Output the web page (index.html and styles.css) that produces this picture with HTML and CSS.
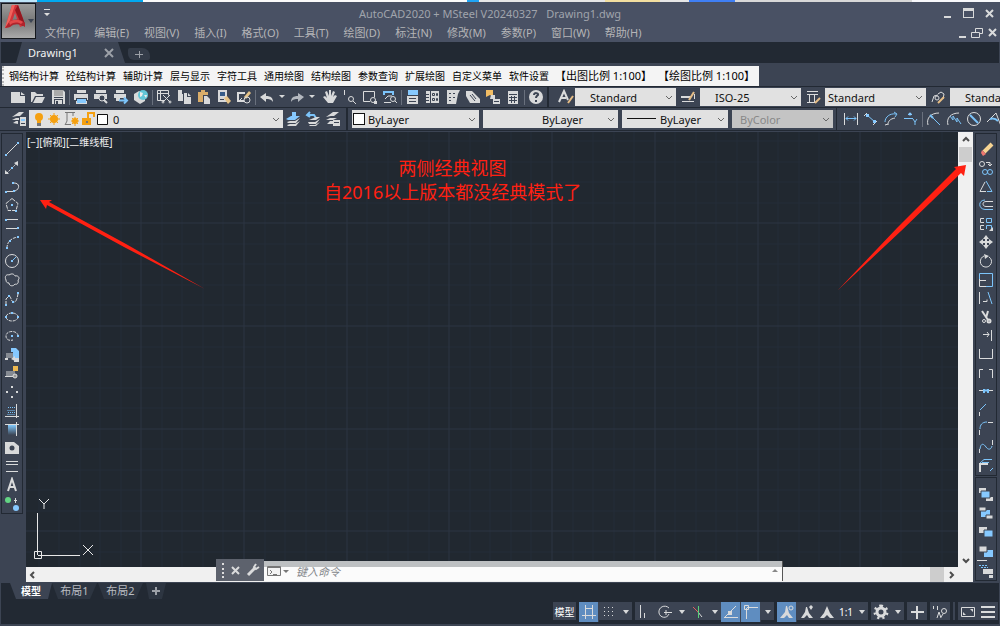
FILE: index.html
```html
<!DOCTYPE html>
<html lang="zh-CN">
<head>
<meta charset="utf-8">
<title>AutoCAD2020 - Drawing1.dwg</title>
<link rel="stylesheet" href="styles.css">
</head>
<body>
<div class="app">
  <div class="backdrop"></div>
  <header class="head">
    <button class="logo" aria-label="应用程序菜单"><svg width="33" height="34" viewBox="0 0 33 34"><path fill="#d2343a" d="M10 1h6l7 20-5 2-5-14-5 14-5 1z"/><path fill="#f0625c" d="M10 1l3 0-7 21-3 2z"/><path fill="#93171f" d="M16 1l7 19-3 2-7-16z"/><path fill="#b0242c" d="M3 24l4-6c6-4 12-3 16 1v4c-5-3-10-4-15 0z"/><path fill="#e2494a" d="M7 18c6-4 12-2 14 0l-2 2c-4-2-7-2-11 1z"/><path fill="#3c4453" d="M26 15h6l-3 4z"/></svg></button>
    <div class="head-main">
      <div class="title-row">
        <button class="quick" aria-label="快速访问"><svg width="8" height="8" viewBox="0 0 8 8"><path fill="#ddd" d="M1 0h6v1H1zM1 4h6L4 7z"/></svg></button>
        <div class="title">AutoCAD2020 + MSteel V20240327 &nbsp; Drawing1.dwg</div>
        <div class="wins">
          <button aria-label="最小化"><svg width="12" height="12" viewBox="0 0 12 12"><path class="f" d="M3 9h7v2H3z"/></svg></button>
          <button aria-label="最大化"><svg width="12" height="12" viewBox="0 0 12 12"><path class="f" fill-rule="evenodd" d="M1 1h11v10H1zM2 4v6h9V4z"/></svg></button>
          <button aria-label="关闭"><svg width="12" height="12" viewBox="0 0 12 12"><path class="s2" d="M3 3l7 7M10 3l-7 7"/></svg></button>
        </div>
      </div>
      <div class="menu-row">
        <nav class="menu">
          <button>文件(F)</button><button>编辑(E)</button><button>视图(V)</button><button>插入(I)</button><button>格式(O)</button><button>工具(T)</button><button>绘图(D)</button><button>标注(N)</button><button>修改(M)</button><button>参数(P)</button><button>窗口(W)</button><button>帮助(H)</button>
        </nav>
        <div class="wins small">
          <button aria-label="最小化文档"><svg width="12" height="12" viewBox="0 0 12 12"><path class="f" d="M3 9h7v2H3z"/></svg></button>
          <button aria-label="还原文档"><svg width="12" height="12" viewBox="0 0 12 12"><path d="M4.500 5V1.500h7v5H9M.5 5.500h8v5h-8z"/></svg></button>
          <button aria-label="关闭文档"><svg width="12" height="12" viewBox="0 0 12 12"><path class="s2" d="M3 2l7 7M10 2l-7 7"/></svg></button>
        </div>
      </div>
    </div>
  </header>

  <div class="filetabs">
    <div class="filetab"><span>Drawing1</span><button aria-label="关闭图形"><svg width="10" height="10" viewBox="0 0 10 10"><path class="g s2" d="M1 1l8 8M9 1l-8 8"/></svg></button></div>
    <button class="newtab" aria-label="新图形"><svg width="8" height="8" viewBox="0 0 8 8"><path class="g" d="M0 4.500h8M4.500 1v7"/></svg></button>
  </div>

  <nav class="msteel">
    <button>钢结构计算</button><button>砼结构计算</button><button>辅助计算</button><button>层与显示</button><button>字符工具</button><button>通用绘图</button><button>结构绘图</button><button>参数查询</button><button>扩展绘图</button><button>自定义菜单</button><button>软件设置</button><button class="scale">【出图比例 1:100】</button><button class="scale">【绘图比例 1:100】</button>
  </nav>

  <div class="bar">
    <div class="tools std">
      <button aria-label="新建"><svg viewBox="0 0 16 16"><path class="f" d="M1 3h9v4h5v7H1zM11 3l4 3h-4z"/></svg></button>
      <button aria-label="打开"><svg viewBox="0 0 16 16"><path class="f" d="M1 3h4l2 2h6v2H5l-3 6H1zM6 8h9l-3 6H3z"/></svg></button>
      <button aria-label="保存"><svg viewBox="0 0 16 16"><path class="f" d="M2 1h11l2 2v12H2z"/><path class="k" d="M4 8h9v1H4zM4 10h9v5H4z"/><path fill="#aaa" d="M4 1h9v6H4z"/><path class="f" d="M5 11h7v4H5z"/><path class="k" d="M6 12h2v3H6z"/></svg></button>
      <i class="sep"></i>
      <button aria-label="打印"><svg viewBox="0 0 16 16"><path class="f" d="M4 1h9v3H4zM1 5h14v6H1zM3 12h11v3H3z"/><path class="k" d="M3 9h11v2H3z"/><path class="bf" d="M4 10h9v4H4z"/></svg></button>
      <button aria-label="打印预览"><svg viewBox="0 0 16 16"><path class="f" d="M3 1h10v3H3zM1 5h13v5H1z"/><circle class="kf" cx="9" cy="9" r="3"/><path class="s2" d="M11 11l3 3"/></svg></button>
      <button aria-label="发布"><svg viewBox="0 0 16 16"><path class="f" d="M3 1h8v3H3zM1 5h12v4H1zM3 9h4v3H3z"/><path class="b s2" d="M6 11.500h8M11 8.500l3 3-3 3"/></svg></button>
      <button aria-label="三维打印"><svg viewBox="0 0 16 16"><path class="f" d="M1 5l5-3 6 3v7l-5 3-6-4z"/><circle cx="10" cy="6" r="5" fill="#63c6d8"/><path fill="#eee" d="M7 3l3 1-1 3-2 1zM11 6l3 0-1 3z"/></svg></button>
      <i class="sep"></i>
      <button aria-label="剪切"><svg viewBox="0 0 16 16"><path d="M8 11.500H1.500v-10h11v5M1 4.500h12M4.500 2v9"/><path d="M7 6l7 7M14 6l-7 7"/><circle cx="7" cy="13" r="1"/><circle cx="14" cy="13" r="1"/></svg></button>
      <button aria-label="复制"><svg viewBox="0 0 16 16"><path class="f" d="M2 1h4v4h1v7H2zM8 4h3v4h4v7H8zM12 4l3 3h-3z"/></svg></button>
      <button aria-label="粘贴"><svg viewBox="0 0 16 16"><path fill="#d9ad6a" d="M2 3h3V1h4v2h3v3H7v7H2z"/><path class="f" d="M8 7h3l3 3v5H8z"/></svg></button>
      <button aria-label="特性匹配"><svg viewBox="0 0 16 16"><path class="f" d="M2 1h9v12H2z"/><path fill="#365b88" d="M4 3h5v4H4z"/><path fill="#e6c387" d="M8 9l3-2 4 5-3 3z"/><path class="ks" d="M4 10.500h4"/></svg></button>
      <button aria-label="块编辑器"><svg viewBox="0 0 16 16"><path class="s2" d="M8 12H2V4h7"/><path fill="#e6c387" d="M8 8l5-6 2 2-5 6z"/><circle cx="11" cy="11" r="3"/><path d="M6 9l-2 2 2 2"/></svg></button>
      <i class="sep"></i>
      <button aria-label="放弃"><svg viewBox="0 0 16 16"><path class="f" d="M1 8l6-4v3c5 0 7 2 7 6-2-3-4-3-7-3v3z"/></svg></button>
      <button class="drop" aria-label="放弃列表"><svg viewBox="0 0 6 16"><path class="f" d="M0 6h6L3 9z"/></svg></button>
      <button aria-label="重做"><svg viewBox="0 0 16 16"><path fill="#b4b8bf" d="M15 8L9 4v3c-5 0-7 2-7 6 2-3 4-3 7-3v3z"/></svg></button>
      <button class="drop" aria-label="重做列表"><svg viewBox="0 0 6 16"><path class="f" d="M0 6h6L3 9z"/></svg></button>
      <button class="pan" aria-label="平移"><svg viewBox="0 0 16 16"><path class="f" d="M6 14L1 8l2-1 2 2-2-6 2-1 2 5V1h2v6l2-5 2 1-2 5 2-2 2 1-4 7z"/></svg></button>
      <button aria-label="缩放"><svg viewBox="0 0 16 16"><path d="M2.500 1v5"/><circle cx="9" cy="10" r="2.500"/><path d="M11 12l3 3"/></svg></button>
      <button aria-label="窗口缩放"><svg viewBox="0 0 16 16"><path d="M8 12.500H1.500v-10h11v6"/><circle cx="11" cy="11" r="2.500"/><path class="f" d="M12 12h3v3h-3z"/></svg></button>
      <button aria-label="缩放上一个"><svg viewBox="0 0 16 16"><path class="b s2" d="M2 6V3h9v3"/><path d="M2 13.500h7M3 10l3-3h4"/><circle cx="11" cy="10" r="2.500"/><path d="M13 12l2 2"/></svg></button>
      <i class="sep"></i>
      <button aria-label="特性"><svg viewBox="0 0 16 16"><path class="f" d="M2 7h11v8H2z"/><path class="bf" d="M3 1h10v5H3z"/><path class="ks" d="M4 9.500h7M4 12.500h7"/></svg></button>
      <button aria-label="设计中心"><svg viewBox="0 0 16 16"><path class="f" d="M1 2h4v12H1zM6 2h8v12H6z"/><path class="ks" d="M1 5.500h3M1 8.500h3M1 11.500h3M7.500 4.500h2v2h-2zM11.500 4.500h1v2h-1zM7.500 9.500h2v2h-2zM11.500 9.500h1v2h-1z"/></svg></button>
      <button aria-label="工具选项板"><svg viewBox="0 0 16 16"><path class="f" d="M2 1h13l-2 4-2 10H2z"/><path class="ks" d="M4 4.500h2M8 4.500h2M4 8.500h2M8 8.500h2M4 11.500h2"/></svg></button>
      <button aria-label="图纸集"><svg viewBox="0 0 16 16"><path class="f" d="M1 2h6l8 8v4H5l-4-7z"/><path class="ks" d="M7 5l4 5M5 6l5 6"/></svg></button>
      <button aria-label="标记集"><svg viewBox="0 0 16 16"><path fill="#f2bd64" d="M1 1h7v7l-3-2-4 2z"/><path class="f" d="M6 6h4v4H5zM8 10h7v5H8z"/><path class="ks" d="M9 12.500h5"/></svg></button>
      <button aria-label="计算器"><svg viewBox="0 0 16 16"><path class="f" d="M3 2h10v13H3z"/><path class="ks" d="M4 5.500h8M4 8.500h8M4 11.500h8M6.500 7v7M9.500 7v7"/></svg></button>
      <i class="sep"></i>
      <button aria-label="帮助"><svg viewBox="0 0 16 16"><circle class="f" cx="8" cy="8" r="7"/><path class="ks s2" d="M6 6c0-3 5-2 4 0-1 1-2 1-2 3M8 11v2"/></svg></button>
    </div>
    <div class="tools styles">
      <label for="textstyle" aria-label="文字样式"><svg viewBox="0 0 16 16"><path class="s2" d="M1 13L6 2l4 9M3 9h5"/><path class="tan" d="M10 14l5-7"/></svg></label>
      <span class="combo mid"><select id="textstyle"><option>Standard</option></select><svg class="chev" viewBox="0 0 8 5"><path d="M1 1l3 3 3-3"/></svg></span>
      <label for="dimstyle" aria-label="标注样式"><svg viewBox="0 0 16 16"><path class="s2" d="M1 8h10"/><path d="M2 12.500h12M14.500 5v5"/><path class="tan" d="M9 11l5-8"/></svg></label>
      <span class="combo mid"><select id="dimstyle"><option>ISO-25</option></select><svg class="chev" viewBox="0 0 8 5"><path d="M1 1l3 3 3-3"/></svg></span>
      <label for="tablestyle" aria-label="表格样式"><svg viewBox="0 0 16 16"><path d="M2 2.500h11M2 5.500h11M4.500 6v7M9.500 6v7M2 13.500h8"/><path class="tan" d="M10 14l5-5"/></svg></label>
      <span class="combo flush"><select id="tablestyle"><option>Standard</option></select><svg class="chev" viewBox="0 0 8 5"><path d="M1 1l3 3 3-3"/></svg></span>
      <label for="leaderstyle" aria-label="多重引线样式"><svg viewBox="0 0 16 16"><path d="M2 13l2-6 4-1M8 5l3-2 3 2-1 5"/><circle cx="7" cy="9" r="2"/><path class="tan" d="M8 14l6-6"/></svg></label>
      <span class="combo mid"><select id="leaderstyle"><option>Standard</option></select></span>
    </div>
  </div>

  <div class="bar second">
    <div class="tools layers">
      <button aria-label="图层特性"><svg viewBox="0 0 16 16"><path class="f" d="M1 6l7-5h5L9 5H6zM1 9l4-2h3v2H1zM2 12l3-2h2v3zM9 6h6v9H9z"/><path class="bf" d="M10 8h4v2h-4z"/><path class="ks" d="M10 12.500h4"/></svg></button>
      <span class="combo layer">
        <svg class="layer-icons" width="80" height="16" viewBox="0 0 80 16"><g fill="#f5a010"><circle cx="10" cy="6" r="4"/><path d="M8 9h4v3H8z"/><circle cx="25" cy="8" r="4"/><path d="M64 6V3h-4v4h-2V1h8v5zM53 7h9v7h-9z"/><circle cx="46" cy="10" r="3"/></g><path stroke="#f5a010" d="M25 2v12M19 8h12M21 4l8 8M29 4l-8 8M46 6v9M42 10h8M43 7l6 6M49 7l-6 6"/><path fill="#777" d="M8 12h4v3H8zM57 10h2v2h-2z"/><path stroke="#777" d="M36 1.500h10M38 2v8l-2 4M36 13.500h6M44 2v3"/><path fill="#fff" stroke="#111" d="M68.500 3.500h10v10h-10z"/></svg>
        <select aria-label="图层"><option>0</option></select><svg class="chev" viewBox="0 0 8 5"><path d="M1 1l3 3 3-3"/></svg>
      </span>
      <button aria-label="置为当前"><svg viewBox="0 0 16 16"><path class="bf" d="M1 8l5-3h9l-5 4H3zM7 1h4v4H7z"/><path class="f" d="M2 11l3-1h5l5-3-4 5H3zM2 14l3-1h5l5-3-4 5H3z"/></svg></button>
      <button aria-label="上一个图层"><svg viewBox="0 0 16 16"><path class="b s2" d="M5 1L2 4l3 2M3 4h6l2 3"/><path class="f" d="M11 6h4l-4 3H4zM3 11h7l5-3-4 5H4zM4 14h6l5-3-4 4H5z"/></svg></button>
      <button aria-label="图层状态"><svg viewBox="0 0 16 16"><path class="f" d="M1 6l7-5h6L9 5H6zM1 9l4-2h7L8 9zM2 13l3-3h3v3zM8 9h7v6H8z"/><path class="ks" d="M9 11.500h5"/></svg></button>
    </div>
    <div class="tools props">
      <span class="combo color"><i class="swatch"></i><select aria-label="颜色"><option>ByLayer</option></select><svg class="chev" viewBox="0 0 8 5"><path d="M1 1l3 3 3-3"/></svg></span>
      <span class="combo ltype"><select aria-label="线型"><option>ByLayer</option></select><svg class="chev" viewBox="0 0 8 5"><path d="M1 1l3 3 3-3"/></svg></span>
      <span class="combo lweight"><i class="rule"></i><select aria-label="线宽"><option>ByLayer</option></select><svg class="chev" viewBox="0 0 8 5"><path d="M1 1l3 3 3-3"/></svg></span>
      <span class="combo plot"><select aria-label="打印样式" disabled><option>ByColor</option></select><svg class="chev" viewBox="0 0 8 5"><path d="M1 1l3 3 3-3"/></svg></span>
    </div>
    <div class="tools dims">
      <button aria-label="线性"><svg viewBox="0 0 16 16"><path d="M1.500 2v12M14.500 2v12"/><path class="b" d="M3 7.500h10M5 5.500l-2 2 2 2M11 5.500l2 2-2 2"/></svg></button>
      <button aria-label="对齐"><svg viewBox="0 0 16 16"><path d="M1 5l3-3M10 14l4-4"/><path class="b" d="M4 4l8 7"/><path class="bf" d="M3 3h3v3H3zM10 9h3v3h-3z"/></svg></button>
      <button aria-label="弧长"><svg viewBox="0 0 16 16"><path d="M5 14c0-4 2-6 7-7M2 14l3-1"/><path class="b" d="M2 11c0-5 5-9 11-8M11 1l3 2-2 3"/></svg></button>
      <button aria-label="坐标"><svg viewBox="0 0 16 16"><path class="b" d="M1 7.500h9M5 3.500h4M10 8l2 3 2-3M12 11v3"/><circle class="bf" cx="7" cy="3" r="1.500"/></svg></button>
      <i class="sep"></i>
      <button aria-label="半径"><svg viewBox="0 0 16 16"><path d="M2 14C0 7 5 2 13 2"/><path class="b s2" d="M4 4l3 3"/><path class="b" d="M7 7l7 7"/></svg></button>
      <button aria-label="折弯"><svg viewBox="0 0 16 16"><path d="M2 14C0 7 5 2 13 2"/><path class="b" d="M4 5l3 4V5l4 6V7l4 6"/></svg></button>
      <button aria-label="直径"><svg viewBox="0 0 16 16"><circle cx="8" cy="8" r="6.500"/><path class="b s2" d="M4 4l8 8"/></svg></button>
      <button aria-label="角度"><svg viewBox="0 0 16 16"><path d="M1 11l9-9 5 13"/><path class="b s2" d="M4 8c3-1 6 0 8 2"/></svg></button>
    </div>
  </div>

  <main class="work">
    <div class="palette left">
      <button aria-label="直线"><svg viewBox="0 0 16 16"><path d="M2 14L14 2"/><path class="bf" d="M1 13h2v2H1zM13 1h2v2h-2z"/></svg></button>
      <button aria-label="构造线"><svg viewBox="0 0 16 16"><path stroke-dasharray="2 1" d="M3 13L13 3"/><path class="f" d="M1 14v-4l4 4zM10 3l4-2v5z"/><path class="bf" d="M7 7h2v2H7z"/></svg></button>
      <button aria-label="多段线"><svg viewBox="0 0 16 16"><path d="M3 12.500h6M11 12c5-2 5-8-1-8"/><path class="bf" d="M1 12h2v2H1zM8 3h2v2H8zM9 11h2v2H9z"/></svg></button>
      <button aria-label="多边形"><svg viewBox="0 0 16 16"><path stroke-dasharray="4 1" d="M8 1.500l6 5-2 7H4l-2-7z"/><path class="bf" d="M7 7h2v2H7zM11 13h2v2h-2z"/></svg></button>
      <button aria-label="矩形"><svg viewBox="0 0 16 16"><path d="M2 3.500h12M2 12.500h11"/><path class="bf" d="M1 3h2v2H1zM13 11h2v2h-2z"/></svg></button>
      <button aria-label="圆弧"><svg viewBox="0 0 16 16"><path stroke-dasharray="3 1" d="M3 13c0-6 4-10 11-11"/><path class="bf" d="M2 12h2v2H2zM5 5h2v2H5zM13 1h2v2h-2z"/></svg></button>
      <button aria-label="圆"><svg viewBox="0 0 16 16"><circle cx="8" cy="8" r="6.500"/><path class="b" d="M8 8l4-4"/><path class="bf" d="M7 7h2v2H7z"/></svg></button>
      <button aria-label="修订云线"><svg viewBox="0 0 16 16"><path d="M2 8c-2-4 1-6 3-5 3-2 5-1 6 1 4-1 5 3 3 4 1 3-1 5-3 4-2 3-6 2-6-1-2 0-3-1-3-3z"/></svg></button>
      <button aria-label="样条曲线"><svg viewBox="0 0 16 16"><path stroke-dasharray="4 1" d="M2 14V8l3-3c2 0 2 5 4 6 3 1 4-3 5-8"/><path class="bf" d="M1 13h2v2H1zM4 4h2v2H4zM8 10h2v2H8zM13 1h2v2h-2z"/></svg></button>
      <button aria-label="椭圆"><svg viewBox="0 0 16 16"><ellipse stroke-dasharray="3 1" cx="8" cy="8" rx="6" ry="4"/><path class="bf" d="M7 3h2v2H7zM1 7h2v2H1zM13 7h2v2h-2z"/></svg></button>
      <button aria-label="椭圆弧"><svg viewBox="0 0 16 16"><path stroke-dasharray="3 1" d="M14 8c0-6-12-6-12 0 0 4 4 5 7 4"/><path class="bf" d="M7 7h2v2H7zM13 7h2v2h-2z"/></svg></button>
      <button aria-label="插入块"><svg viewBox="0 0 16 16"><path fill="#858a92" d="M2 6h9v5H2z"/><path class="bf" d="M7 1h5l3 3v7H9V5H7z"/><path class="f" d="M1 11h3v2H1zM10 11h5v4h-5zM7 12l4-3v5z"/></svg></button>
      <button aria-label="创建块"><svg viewBox="0 0 16 16"><path fill="#858a92" d="M2 6h9v5H2z"/><path fill="#edb84f" d="M9 1h5v5H9z"/><path d="M1 11.500h8"/><circle class="gf" cx="11" cy="11" r="2"/></svg></button>
      <button aria-label="点"><svg viewBox="0 0 16 16"><path class="f" d="M7 2h2v2H7zM7 12h2v2H7zM2 7h2v2H2zM12 7h2v2h-2z"/></svg></button>
      <button aria-label="图案填充"><svg viewBox="0 0 16 16"><path class="b" stroke-dasharray="1 1" d="M4 4.500h8M3.500 7.500h8M4 9.500h8M3.500 11.500h8"/><path d="M12.500 1v14M1 13.500h14"/></svg></button>
      <button aria-label="渐变色"><svg viewBox="0 0 16 16"><defs><linearGradient id="fade" x2="0" y2="1"><stop stop-color="#80c8fc"/><stop offset="1" stop-color="#3c4453"/></linearGradient></defs><path fill="url(#fade)" d="M4 4h8v10H4z"/><path d="M1 3.500h14M12.500 1v14"/></svg></button>
      <button aria-label="面域"><svg viewBox="0 0 16 16"><path class="f" d="M1 2h9l5 4v8H1z"/><circle class="k" cx="8" cy="8" r="2.500"/></svg></button>
      <button aria-label="表格"><svg viewBox="0 0 16 16"><path d="M2 3.500h12M2 6.500h12M2 13.500h12"/></svg></button>
      <button aria-label="多行文字"><svg viewBox="0 0 16 16"><path class="s2" d="M4 14L8 2l4 12M5 10h6"/></svg></button>
      <button aria-label="添加选定对象"><svg viewBox="0 0 16 16"><circle cx="4" cy="4" r="3" fill="#63d584"/><circle class="bf" cx="12" cy="12" r="3"/><path d="M11.500 2v5M10 4.500h3"/></svg></button>
    </div>

    <div class="view">
      <div class="canvas">
        <svg class="grid"><path class="minor" d="M13 0v4000M33 0v4000M54 0v4000M74 0v4000M95 0v4000M136 0v4000M156 0v4000M177 0v4000M197 0v4000M239 0v4000M259 0v4000M280 0v4000M300 0v4000M341 0v4000M362 0v4000M382 0v4000M403 0v4000M444 0v4000M464 0v4000M485 0v4000M505 0v4000M547 0v4000M567 0v4000M588 0v4000M608 0v4000M649 0v4000M670 0v4000M690 0v4000M711 0v4000M752 0v4000M773 0v4000M793 0v4000M814 0v4000M855 0v4000M875 0v4000M896 0v4000M916 0v4000M0 9h4000M0 30h4000M0 50h4000M0 71h4000M0 112h4000M0 132h4000M0 153h4000M0 173h4000M0 215h4000M0 235h4000M0 256h4000M0 276h4000M0 317h4000M0 338h4000M0 358h4000M0 379h4000M0 420h4000"/><path class="major" d="M115 0v4000M218 0v4000M321 0v4000M423 0v4000M526 0v4000M629 0v4000M732 0v4000M834 0v4000M0 91h4000M0 194h4000M0 297h4000M0 399h4000"/></svg>
        <div class="viewlabel">[−][俯视][二维线框]</div>
        <p class="note">两侧经典视图<br>自2016以上版本都没经典模式了</p>
        <svg class="ucs" width="64" height="64" viewBox="0 0 64 64"><path d="M7.500 57V15M8 57.500h42M4.500 53.500h7v7h-7zM9 1l5 5 5-5M14 6v5M53 47l10 10M63 47L53 57"/></svg>
      </div>
      <div class="vscroll"><button aria-label="向上滚动"><svg viewBox="0 0 8 8"><path class="dark" d="M1 5l3-3 3 3"/></svg></button><i class="thumb"></i><button class="end" aria-label="向下滚动"><svg viewBox="0 0 8 8"><path class="dark" d="M1 3l3 3 3-3"/></svg></button></div>
      <div class="hscroll"><button aria-label="向左滚动"><svg viewBox="0 0 8 8"><path class="dark" d="M5 1L2 4l3 3"/></svg></button><i class="thumb"></i><button aria-label="向右滚动"><svg viewBox="0 0 8 8"><path class="dark" d="M3 1l3 3-3 3"/></svg></button></div>
      <div class="command">
        <div class="handle"><i class="grip"></i><button aria-label="关闭命令行"><svg width="9" height="9" viewBox="0 0 9 9"><path class="s2" d="M1 1l7 7M8 1L1 8"/></svg></button><button aria-label="自定义"><svg width="14" height="14" viewBox="0 0 14 14"><path stroke-width="3" d="M2 12l7-7"/><path class="s2" d="M10 1L8 4l2 2 3-2"/></svg></button></div>
        <div class="entry"><svg width="22" height="12" viewBox="0 0 22 12"><path fill="#f3f3f3" stroke="#777" d="M.5 1.500h13v9H.5z"/><path stroke="#777" d="M0 2.500h14M3 5l2 2-2 2M6 9.500h4"/><path fill="#777" d="M16 5h6l-3 3z"/></svg><input type="text" placeholder="键入命令" aria-label="命令"><svg width="8" height="8" viewBox="0 0 8 8"><path fill="#888" d="M1 5h6L4 2z"/></svg></div>
      </div>
      <svg class="arrow-left" width="166" height="90" viewBox="0 0 166 90"><path d="M0 0l12 0-3 2L86 44l79 45L84 47 7 5l-1 4z"/></svg>
      <svg class="arrow-right" width="130" height="126" viewBox="0 0 130 126"><path d="M129 0l-2 11-3-3L64 66 1 125 60 63l59-59-2-2z"/></svg>
    </div>

    <div class="side">
      <div class="palette modify">
        <button aria-label="删除"><svg viewBox="0 0 16 16"><path stroke="#f6d493" stroke-width="4" d="M6 11l8-8"/><path fill="#ee7770" d="M4 9l4 4-3 2-2-3z"/></svg></button>
        <button aria-label="复制对象"><svg viewBox="0 0 16 16"><circle cx="4" cy="4" r="2.500"/><path d="M8 2.500h4v3M10 4l2 2 2-2"/><g class="b"><circle cx="7" cy="12" r="2.500"/><circle cx="12" cy="12" r="2.500"/></g></svg></button>
        <button aria-label="镜像"><svg viewBox="0 0 16 16"><path d="M7 3L2 12.500h6"/><path class="b" d="M8 2l6 10.500H9"/></svg></button>
        <button aria-label="偏移"><svg viewBox="0 0 16 16"><path class="b" d="M7 3C0 3 0 12 7 12.500h8"/><path d="M15 4.500H8c-4 0-4 5 0 5h7"/></svg></button>
        <button aria-label="阵列"><svg viewBox="0 0 16 16"><path d="M6 2.500H2.500v4H6M6 9.500H2.500v4H6"/><path class="b" d="M8.500 2.500h5v4h-5zM8.500 13V9.500h5V13"/><path class="f" d="M15 11v4h-4z"/></svg></button>
        <button aria-label="移动"><svg viewBox="0 0 16 16"><path class="s2" d="M8 3v10M3 8h10"/><path class="f" d="M8 1l3 4H5zM8 15l3-4H5zM1 8l4-3v6zM15 8l-4-3v6z"/></svg></button>
        <button aria-label="旋转"><svg viewBox="0 0 16 16"><path d="M6 3C1 5 1 13 7 14c6 1 9-7 4-10"/><path class="f" d="M6 1l5 2-4 3z"/></svg></button>
        <button aria-label="缩放对象"><svg viewBox="0 0 16 16"><path class="b" d="M1.500 7V1.500h13v13H8"/><path d="M1.500 7v7.500H8M2 8.500h6"/></svg></button>
        <button aria-label="拉伸"><svg viewBox="0 0 16 16"><path d="M1.500 2v12M5 11.500h4v-2"/><path class="b" d="M10 2l4 12"/></svg></button>
        <button aria-label="修剪"><svg viewBox="0 0 16 16"><path class="s2" d="M4 2l6 9M10 2L8 9"/><circle cx="6" cy="12" r="1.500"/><circle class="s2" cx="11" cy="12" r="1.500"/></svg></button>
        <button aria-label="延伸"><svg viewBox="0 0 16 16"><path d="M5 7.500h6M9 5l2 2.500L9 10M13.500 3v11"/></svg></button>
        <button aria-label="打断于点"><svg viewBox="0 0 16 16"><path d="M1.500 3v9.500h13V3"/></svg></button>
        <button aria-label="打断"><svg viewBox="0 0 16 16"><path d="M1.500 13V4.500H5M11 4.500h3.500V13"/></svg></button>
        <button aria-label="合并"><svg viewBox="0 0 16 16"><path d="M1 7.500h14"/><path class="b s2" d="M5 7.500h6M6 6v4M10 6v4"/></svg></button>
        <button aria-label="倒角"><svg viewBox="0 0 16 16"><path class="b" d="M2 8l6-6"/><path d="M1.500 10v4"/></svg></button>
        <button aria-label="圆角"><svg viewBox="0 0 16 16"><path class="b" d="M2 9c0-4 2-7 7-7"/><path d="M1.500 10v5M10 2.500h5"/></svg></button>
        <button aria-label="光顺曲线"><svg viewBox="0 0 16 16"><path class="b" d="M2 10c1-7 4-5 6-2s5 3 6-1"/><path d="M1.500 10v4M14.500 1v5"/></svg></button>
        <button aria-label="分解"><svg viewBox="0 0 16 16"><path class="b" d="M2 5l4-3.500h8M12 13l3-3M4 4.500h7"/><path class="s2" d="M2 14V6h8"/></svg></button>
      </div>
      <div class="palette order">
        <button aria-label="前置"><svg viewBox="0 0 16 16"><path class="f" d="M1 2h7v5H1zM8 11h7v4H8z"/><path class="bf kk" d="M3 5h9v7H3z"/></svg></button>
        <button aria-label="后置"><svg viewBox="0 0 16 16"><path class="bf" d="M3 5h9v7H3z"/><path class="f kk" d="M1 2h7v4H1zM8 10h7v4H8z"/></svg></button>
        <button aria-label="置于对象之上"><svg viewBox="0 0 16 16"><path class="f" d="M1 3h8v6H1z"/><path class="bf kk" d="M6 6h9v7H6z"/></svg></button>
        <button aria-label="置于对象之下"><svg viewBox="0 0 16 16"><path class="bf" d="M6 7h9v7H6z"/><path class="f kk" d="M1 3h8v6H1z"/></svg></button>
        <i class="line"></i>
        <button aria-label="注释前置"><svg viewBox="0 0 16 16"><path class="b" stroke-dasharray="2 1" d="M1 2.500h9M3 4.500h7"/><path class="f" d="M5 6h10v5H5zM11 12h4v3h-4z"/></svg></button>
      </div>
    </div>
  </main>

  <nav class="layouts"><button class="on">模型</button><button>布局1</button><button>布局2</button><button class="add" aria-label="新建布局"><svg width="8" height="8" viewBox="0 0 8 8"><path class="g s2" d="M0 4h8M4 0v8"/></svg></button></nav>

  <footer class="status">
    <div class="grp"><button class="txt">模型</button></div>
    <div class="grp"><button class="act" aria-label="栅格"><svg viewBox="0 0 16 16"><path d="M4.500 1v14M11.500 1v14M1 11.500h14M5 4.500h6"/></svg></button><button aria-label="捕捉"><svg viewBox="0 0 16 16"><path class="f" d="M3 3h1v1H3zM7 3h1v1H7zM11 3h1v1h-1zM3 7h1v1H3zM7 7h1v1H7zM11 7h1v1h-1zM3 11h1v1H3zM7 11h1v1H7zM11 11h1v1h-1z"/></svg></button><button class="tri" aria-label="捕捉选项"><svg viewBox="0 0 6 16"><path class="f" d="M0 6h6L3 10z"/></svg></button></div>
    <div class="grp"><button aria-label="正交"><svg viewBox="0 0 16 16"><path d="M3.500 1v13M7.500 9v5"/></svg></button><button aria-label="极轴"><svg viewBox="0 0 16 16"><path d="M12 4c-4-4-11-1-10 5 1 5 8 6 10 1M7 8.500h8M9 6v5"/></svg></button><button class="tri" aria-label="极轴选项"><svg viewBox="0 0 6 16"><path class="f" d="M0 6h6L3 10z"/></svg></button><button aria-label="等轴测"><svg viewBox="0 0 16 16"><path stroke="#e26060" d="M3 3l5 5"/><path d="M8 8l4 5"/><path stroke="#58cf78" d="M8.500 2v12"/></svg></button><button class="tri" aria-label="等轴测选项"><svg viewBox="0 0 6 16"><path class="f" d="M0 6h6L3 10z"/></svg></button><button class="act" aria-label="对象捕捉追踪"><svg viewBox="0 0 16 16"><path d="M1 13.500h14M2 13L13 2"/><path class="f" d="M5 7h4v4H5z"/></svg></button><button class="act" aria-label="对象捕捉"><svg viewBox="0 0 16 16"><path d="M3.500 15V4M4 3.500h11M1.500 1.500h4v4h-4z"/></svg></button><button class="tri" aria-label="对象捕捉选项"><svg viewBox="0 0 6 16"><path class="f" d="M0 6h6L3 10z"/></svg></button></div>
    <div class="grp"><button class="act" aria-label="注释可见性"><svg viewBox="0 0 16 16"><path class="f" d="M7 2l1 0 2 7 4 5h-4l-2-3-3 3H1l5-6z"/><circle cx="12" cy="4" r="2"/></svg></button><button aria-label="自动缩放"><svg viewBox="0 0 16 16"><path class="f" d="M7 3h1l2 6 4 5h-4l-2-3-3 3H2l4-6zM12 1l2 2-2 3-2-3z"/></svg></button><button aria-label="注释比例"><svg viewBox="0 0 16 16"><path class="f" d="M8 2l3 7 4 5h-4l-3-3-3 3H1l4-5z"/></svg></button><button class="ratio">1:1</button><button class="tri" aria-label="比例列表"><svg viewBox="0 0 6 16"><path class="f" d="M0 6h6L3 10z"/></svg></button></div>
    <div class="grp"><button aria-label="切换工作空间"><svg viewBox="0 0 16 16"><circle cx="8" cy="8" r="4" stroke-width="3"/><path stroke-width="3" stroke-dasharray="2 3" d="M8 2a6 6 0 1 1 0 12a6 6 0 1 1 0-12"/></svg></button><button class="tri" aria-label="工作空间列表"><svg viewBox="0 0 6 16"><path class="f" d="M0 6h6L3 10z"/></svg></button></div>
    <div class="grp"><button aria-label="注释监视器"><svg viewBox="0 0 16 16"><path class="s2" d="M8 2v13M2 8h13"/></svg></button></div>
    <div class="grp"><button aria-label="隔离对象"><svg viewBox="0 0 16 16"><path d="M1.500 2v3M5.500 2v4M5 14l2-6 2 6"/><circle cx="12" cy="7" r="2.500"/><path d="M11 10l-2 3"/></svg></button></div>
    <div class="grp bit"></div>
    <div class="grp"><button aria-label="全屏显示"><svg viewBox="0 0 16 16"><path d="M1.500 3.500h13v9h-13z"/><path class="f" d="M3 11V8l3 3zM13 5v3l-3-3z"/></svg></button><button aria-label="自定义状态栏"><svg viewBox="0 0 16 16"><path class="s2" d="M1 3h14M1 8h14M1 13h14"/></svg></button></div>
  </footer>
</div>
</body>
</html>
```
FILE: styles.css
```css
* { box-sizing: border-box; }
html, body { height: 100%; margin: 0; }
body, button, select, input {
  font-family: "Noto Sans", "Noto Sans CJK SC", sans-serif;
  font-size: 11px;
}
button {
  display: flex; align-items: center; justify-content: center;
  padding: 0; border: 0; background: none; color: inherit;
  white-space: nowrap; line-height: 16px;
}
svg { display: block; fill: none; stroke: #dadbdc; flex: none; }
svg [fill]:not([stroke]) { stroke: none; }
.f { fill: #d8d9da; stroke: none; }
.b { stroke: #7cc4fa; }
.bf { fill: #86c9ff; stroke: none; }
.gf { fill: #999; }
.g { stroke: #9da1a8; }
.k { fill: #3c4453; stroke: none; }
.kf { fill: #3c4453; }
.ks { stroke: #3c4453; }
.kk { stroke: #3c4453; stroke-width: 1; }
.s2 { stroke-width: 2; }
.tan { stroke: #e6bd86; stroke-width: 2; }
.dark { stroke: #4d4d4d; stroke-width: 2; }

.app {
  display: flex; flex-direction: column;
  height: 100%; overflow: hidden;
  background: #3c4453; color: #fff;
}
.backdrop {
  height: 2px; flex: none;
  background: linear-gradient(90deg, #bfe6fa 37px, #00a8f0 37px 143px, #fafafa 143px 467px, #20a5f5 467px 479px, #e6e6e6 479px 605px, #f3dfa0 605px 660px, #e6e6e6 660px 689px, #3f7ff5 689px 735px, #d8d8d8 735px 912px, #f8f8fb 912px);
}

/* title and menu */
.head { display: flex; height: 40px; flex: none; background: #495164; padding-left: 1px; }
.logo {
  width: 35px; height: 36px; margin-top: 1px;
  background: linear-gradient(#9c9c9c, #777 50%, #aaa);
  border: 1px solid #15181d;
}
.head-main { flex: 1; display: flex; flex-direction: column; }
.title-row { display: flex; align-items: center; height: 22px; padding: 0 5px 0 7px; }
.quick { width: 8px; }
.title { flex: 1; text-align: center; color: #a0a4ac; font-size: 11px; padding-right: 12px; }
.wins { display: flex; gap: 9px; }
.wins.small { gap: 3px; }
.menu-row { display: flex; justify-content: space-between; align-items: center; height: 18px; padding: 0 2px 0 9px; }
.menu { display: flex; gap: 15px; color: #b5b5b7; }

.filetabs { display: flex; height: 21px; flex: none; background: #222933; margin: 0 1px; }
.filetab {
  display: flex; align-items: center; justify-content: space-between;
  width: 109px; margin-left: 15px; padding: 0 11px 0 12px;
  background: #3c4453; color: #f2f2f2; font-size: 11px;
  clip-path: polygon(6px 0, 102px 0, 100% 100%, 0 100%);
}
.newtab { width: 22px; height: 12px; margin: 6px 0 0 3px; background: #343c49; border-radius: 2px 8px 2px 6px; }

/* white menu strip */
.msteel {
  display: flex; align-self: flex-start; align-items: center; gap: 7px;
  height: 20px; margin: 3px 0 0 2px; padding: 0 4px 0 5px;
  border-left: 2px dotted #bbb; background: #f4f4f4; color: #000; flex: none;
}
.msteel button { font-size: 10px; }
.msteel .scale { font-size: 11px; margin-left: -1px; }

/* tool bars */
.bar { display: flex; height: 21px; flex: none; border-top: 1px solid #222933; overflow: hidden; }
.bar.second { height: 24px; border-bottom: 1px solid #222933; margin-bottom: 1px; }
.tools { display: flex; align-items: center; flex: none; border-right: 1px solid #222933; }
.tools > button { width: 20px; height: 20px; }
.tools button svg, .tools label svg, .palette button svg, .status button svg { width: 16px; height: 16px; }
.tools .drop { width: 10px; }
.tools .drop svg, .status .tri svg { width: 6px; }
.tools .pan { margin-left: 3px; }
.sep { width: 1px; height: 15px; margin: 0 1px; background: #69707d; }
.std { padding-left: 8px; width: 549px; border-right-width: 2px; }
.styles { padding-left: 7px; border: 0; }
.styles label { width: 19px; display: flex; justify-content: center; }
.combo + label { width: 24px; }

.combo { position: relative; display: block; height: 18px; width: 101px; flex: none; }
.combo select {
  display: block; width: 100%; height: 100%; margin: 0; padding: 0 18px 0 15px;
  appearance: none; border: 0; border-radius: 0;
  background: #e1e1e1; color: #111; font-size: 11px;
}
.combo.flush select { padding-left: 3px; }
.chev { position: absolute; right: 3px; top: 7px; width: 8px; height: 5px; stroke: #666; }
.layers { width: 348px; padding-left: 9px; border-right-width: 2px; }
.combo.layer { width: 254px; }
.combo.layer select { padding-left: 84px; }
.layer-icons { position: absolute; left: 0; top: 1px; }
.props { gap: 4px; padding: 0 3px 0 4px; }
.combo.color { width: 127px; }
.combo.color select { padding-left: 16px; }
.swatch { position: absolute; left: 1px; top: 3px; width: 12px; height: 12px; background: #fff; border: 1px solid #111; }
.combo.ltype { width: 135px; }
.combo.ltype select { padding-left: 59px; }
.combo.lweight { width: 106px; }
.combo.lweight select { padding-left: 38px; }
.rule { position: absolute; left: 5px; top: 8px; width: 29px; height: 1px; background: #111; }
.combo.plot select { background: #c4c4c4; color: #888; opacity: 1; padding-left: 8px; }
.dims { padding-left: 4px; border: 0; }

/* workspace */
.work { display: flex; flex: 1; min-height: 0; }
.palette {
  display: flex; flex-direction: column;
  width: 22px; padding: 6px 0 0; border: 1px solid #222933;
}
.palette button { flex: 1; min-height: 0; }
.left { height: 381px; margin: 1px 3px 0 1px; flex: none; }
.modify { height: 343px; }
.order { height: 104px; margin-top: 1px; }
.line { width: 10px; height: 1px; background: #ddd; margin-left: 1px; }
.side { width: 25px; margin: 1px 0 0 2px; flex: none; overflow: hidden; }

.view {
  position: relative; flex: 1; min-width: 0;
  display: grid; grid-template: 1fr 15px / 1fr 15px;
}
.canvas { position: relative; background: #212830; overflow: hidden; }
.grid { position: absolute; inset: 0; width: 100%; height: 100%; }
.minor { stroke: #252d38; }
.major { stroke: #2c3443; }
.viewlabel { position: absolute; left: 1px; top: 3px; font-size: 10px; line-height: 14px; color: #f0f0f0; }
.note {
  position: absolute; left: 298px; top: 24px; margin: 0;
  font-size: 18px; line-height: 24px;
  text-align: center; white-space: nowrap; color: #ff2012;
}
.ucs { position: absolute; left: 4px; bottom: 5px; stroke: #e8e8e8; }
.vscroll { display: flex; flex-direction: column; background: #f0f0f0; padding: 0 1px; }
.vscroll button { height: 15px; }
.vscroll svg, .hscroll svg { width: 8px; height: 8px; }
.vscroll .thumb { height: 15px; background: #cdcdcd; }
.vscroll .end { margin-top: auto; }
.hscroll { grid-column: 1 / -1; display: flex; background: #f0f0f0; padding-right: 15px; }
.hscroll button { width: 14px; }
.hscroll .thumb { width: 14px; margin-left: auto; background: #cdcdcd; }

.command { position: absolute; left: 190px; right: 190px; bottom: 1px; height: 22px; display: flex; }
.handle { width: 48px; display: flex; align-items: center; justify-content: space-between; padding: 0 4px 0 6px; background: #5d626d; }
.grip { width: 0; height: 15px; border-left: 2px dotted #ddd; }
.entry {
  flex: 1; display: flex; align-items: center; padding: 0 3px; margin-top: 2px;
  background: linear-gradient(#bdc0c2 6px, #fbfbfb 6px); border-right: 1px solid #555;
}
.entry input { flex: 1; min-width: 0; height: 18px; padding: 0 0 0 7px; border: 0; background: none; font-style: italic; color: #333; }
.entry input::placeholder { color: #85888c; }
.arrow-left, .arrow-right { position: absolute; fill: #ff2012; stroke: none; }
.arrow-left { left: 14px; top: 68px; }
.arrow-right { right: 6px; top: 33px; }

/* layout tabs and status bar */
.layouts { display: flex; height: 16px; flex: none; background: #222933; margin: 1px 1px 0; padding-left: 9px; }
.layouts button {
  width: 45px; margin-right: 1px; font-size: 11px; background: #2d3541; color: #b9bcc2;
  clip-path: polygon(0 0, 100% 0, 38px 100%, 6px 100%);
}
.layouts .on { width: 42px; margin-right: 0; background: #3c4453; color: #fff; font-weight: 700; font-size: 10px; }
.layouts .add { width: 20px; margin-left: 2px; clip-path: polygon(0 0, 100% 0, 16px 100%, 3px 100%); }
.status {
  display: flex; justify-content: flex-end; gap: 3px;
  height: 27px; flex: none; padding: 3px 1px 4px;
  background: #222933; border-bottom: 2px solid #3c4453; margin: 0 1px;
}
.grp { display: flex; background: #3c4453; }
.grp button { width: 20px; height: 20px; }
.grp .act { background: #5f8dc0; border-right: 1px solid #3c4453; }
.grp .tri { width: 13px; }
.grp .txt { width: 23px; font-size: 10px; }
.grp .ratio { width: 18px; font-size: 10px; }
.grp.bit { width: 2px; }
```
